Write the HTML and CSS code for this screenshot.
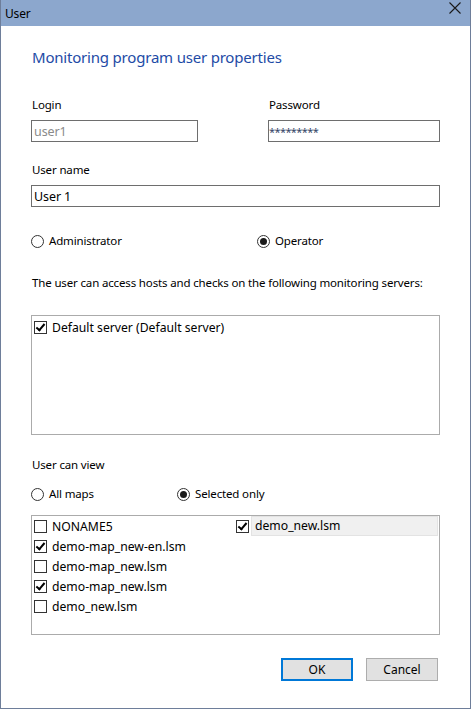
FILE: index.html
```html
<!DOCTYPE html>
<html lang="en">
<head>
    <meta charset="UTF-8">
    <title>User</title>
    <link rel="stylesheet" href="styles.css">
</head>
<body>
    <div class="window">
        <div class="titlebar">
            <span class="title">User</span>
            <svg class="close" width="12" height="12" viewBox="0 0 12 12">
                <path d="M0.5 0.5 L11.5 11.5 M11.5 0.5 L0.5 11.5" stroke="#1a1a1a" stroke-width="1.1" fill="none"/>
            </svg>
        </div>

        <div class="content">
            <h1 class="heading">Monitoring program user properties</h1>

            <div class="field-row">
                <div class="field">
                    <label class="label">Login</label>
                    <input class="input input-login" type="text" value="user1" disabled>
                </div>
                <div class="field">
                    <label class="label">Password</label>
                    <input class="input input-password" type="text" value="*********">
                </div>
            </div>

            <div class="field field-name">
                <label class="label">User name</label>
                <input class="input input-name" type="text" value="User 1">
            </div>

            <div class="radio-row role-row">
                <div class="radio"><span class="radio-dot"></span>Administrator</div>
                <div class="radio checked"><span class="radio-dot"></span>Operator</div>
            </div>

            <p class="text servers-text">The user can access hosts and checks on the following monitoring servers:</p>

            <div class="listbox">
                <div class="item checked"><span class="check"></span>Default server (Default server)</div>
            </div>

            <p class="text view-text">User can view</p>

            <div class="radio-row maps-row">
                <div class="radio"><span class="radio-dot"></span>All maps</div>
                <div class="radio checked"><span class="radio-dot"></span>Selected only</div>
            </div>

            <div class="listbox maps">
                <div class="col">
                    <div class="item"><span class="check"></span>NONAME5</div>
                    <div class="item checked"><span class="check"></span>demo-map_new-en.lsm</div>
                    <div class="item"><span class="check"></span>demo-map_new.lsm</div>
                    <div class="item checked"><span class="check"></span>demo-map_new.lsm</div>
                    <div class="item"><span class="check"></span>demo_new.lsm</div>
                </div>
                <div class="col">
                    <div class="item checked selected"><span class="check"></span><span class="item-text">demo_new.lsm</span></div>
                </div>
            </div>

            <div class="buttons">
                <button class="button default">OK</button>
                <button class="button">Cancel</button>
            </div>
        </div>
    </div>
</body>
</html>
```

FILE: styles.css
```css
body {
    margin: 0;
    padding: 0;
    font-family: 'Noto Sans', 'Open Sans', sans-serif;
    font-size: 11.5px;
    letter-spacing: -0.15px;
    color: #000000;
    background-color: #FFFFFF;
}
.window {
    width: 471px;
    height: 709px;
    box-sizing: border-box;
    border: 1px solid #6E7E9A;
    border-top: none;
    background-color: #FFFFFF;
    overflow: hidden;
}
.titlebar {
    height: 26px;
    background-color: #8CA7CD;
    display: flex;
    align-items: center;
    justify-content: space-between;
    padding: 0 9px 0 4px;
    margin: 0 -1px;
    border-left: 1px solid #7A8FB0;
    border-right: 1px solid #7A8FB0;
}
.title {
    font-size: 12px;
    line-height: 16px;
    margin-top: 2px;
}
.close {
    margin-top: -10px;
}
.content {
    padding: 0 30px;
}
.heading {
    margin: 21px 0 0 1px;
    font-size: 15px;
    line-height: 20px;
    letter-spacing: -0.2px;
    font-weight: normal;
    color: #1E4BA6;
}
.field-row {
    display: grid;
    grid-template-columns: 237px 1fr;
    margin-top: 30px;
}
.field {
    display: flex;
    flex-direction: column;
    align-items: flex-start;
}
.label {
    line-height: 16px;
    margin: 0 0 7px 1px;
}
.input {
    height: 22px;
    box-sizing: border-box;
    border: 1px solid #6E6E6E;
    padding: 0 2px;
    margin: 0;
    font-family: inherit;
    font-size: 12.5px;
    letter-spacing: -0.1px;
    background-color: #FFFFFF;
    color: #000000;
    outline: none;
}
.input-login {
    width: 167px;
    color: #8A8A8A;
}
.input-password {
    width: 172px;
    padding: 0;
    font-size: 11px;
    letter-spacing: -0.6px;
    color: #334466;
}
.field-name {
    margin-top: 20px;
}
.input-name {
    width: 409px;
}
.radio-row {
    display: flex;
    line-height: 16px;
}
.role-row {
    margin-top: 26px;
}
.role-row .radio:first-child {
    width: 226px;
}
.maps-row {
    margin-top: 13px;
}
.maps-row .radio:first-child {
    width: 146px;
}
.radio {
    display: flex;
    align-items: center;
}
.radio-dot {
    width: 11px;
    height: 11px;
    border: 1px solid #333333;
    border-radius: 50%;
    margin-right: 5px;
    position: relative;
    background-color: #FFFFFF;
}
.radio.checked .radio-dot::after {
    content: '';
    position: absolute;
    left: 2px;
    top: 2px;
    width: 7px;
    height: 7px;
    border-radius: 50%;
    background-color: #1A1A1A;
}
.text {
    margin: 0 0 0 1px;
    line-height: 16px;
}
.servers-text {
    margin-top: 26px;
}
.view-text {
    margin-top: 22px;
}
.listbox {
    margin-top: 24px;
    height: 120px;
    width: 409px;
    box-sizing: border-box;
    border: 1px solid #ABABAB;
    padding: 1px 1px;
}
.maps {
    margin-top: 13px;
    display: grid;
    grid-template-columns: 202px 1fr;
    padding-top: 0;
}
.item {
    display: flex;
    align-items: center;
    height: 20px;
    font-size: 12.2px;
    letter-spacing: 0;
}
.check {
    width: 11px;
    height: 11px;
    border: 1px solid #333333;
    margin: 0 5px 0 1px;
    position: relative;
    flex-shrink: 0;
}
.item.checked .check::after {
    content: '';
    position: absolute;
    left: 3px;
    top: 0px;
    width: 3px;
    height: 7px;
    border-right: 2px solid #000000;
    border-bottom: 2px solid #000000;
    transform: rotate(40deg);
}
.item.selected .check {
    margin-right: 2px;
}
.item-text {
    flex: 1;
    height: 18px;
    line-height: 18px;
    padding-left: 3px;
    background-color: #F0F0F0;
    border: 1px solid #E3E3E3;
}
.buttons {
    display: flex;
    justify-content: flex-end;
    gap: 13px;
    margin-top: 23px;
    padding-right: 2px;
}
.button {
    width: 72px;
    height: 23px;
    box-sizing: border-box;
    border: 1px solid #ADADAD;
    background-color: #E1E1E1;
    font-family: inherit;
    font-size: 12px;
    color: #000000;
    padding: 0;
}
.button.default {
    border: 2px solid #0078D7;
}
```
